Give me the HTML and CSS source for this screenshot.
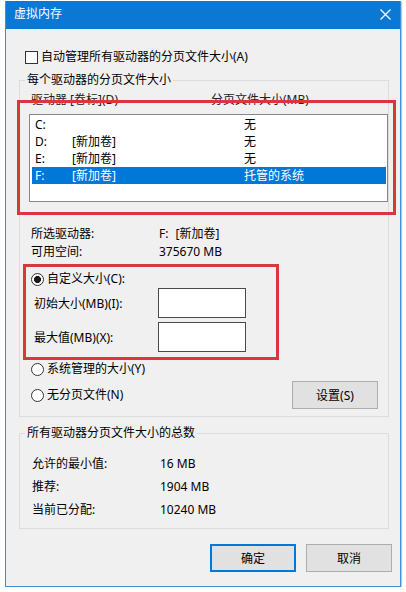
FILE: index.html
```html
<!DOCTYPE html>
<html lang="zh-CN">
<head>
<meta charset="utf-8">
<title>虚拟内存</title>
<link rel="stylesheet" href="styles.css">
</head>
<body>
<div class="window">
  <div class="titlebar">
    <span class="title">虚拟内存</span>
    <svg class="close" width="11" height="11" viewBox="0 0 11 11"><path d="M0.5 0.5 L10.5 10.5 M10.5 0.5 L0.5 10.5" stroke="#fff" stroke-width="1.2" fill="none"/></svg>
  </div>
  <div class="client">
    <div class="check-row"><span class="checkbox"></span><span>自动管理所有驱动器的分页文件大小(A)</span></div>

    <fieldset class="group g1">
      <legend>每个驱动器的分页文件大小</legend>
      <div class="list-head"><span>驱动器 [卷标](D)</span><span>分页文件大小(MB)</span></div>
      <div class="listbox">
        <div class="lrow"><span>C:</span><span></span><span>无</span></div>
        <div class="lrow"><span>D:</span><span>[新加卷]</span><span>无</span></div>
        <div class="lrow"><span>E:</span><span>[新加卷]</span><span>无</span></div>
        <div class="lrow sel"><span>F:</span><span>[新加卷]</span><span>托管的系统</span></div>
      </div>
      <div class="info first"><span>所选驱动器:</span><span>F:<span class="gap"></span>[新加卷]</span></div>
      <div class="info"><span>可用空间:</span><span>375670 MB</span></div>

      <div class="custom">
        <div class="radio-row inner"><span class="radio on"></span><span>自定义大小(C):</span></div>
        <div class="field-row f1"><span class="flabel">初始大小(MB)(I):</span><span class="input"></span></div>
        <div class="field-row f2"><span class="flabel">最大值(MB)(X):</span><span class="input"></span></div>
      </div>

      <div class="radio-row sys"><span class="radio"></span><span>系统管理的大小(Y)</span></div>
      <div class="radio-row none"><span class="radio"></span><span>无分页文件(N)</span><button class="btn set">设置(S)</button></div>
    </fieldset>

    <fieldset class="group g2">
      <legend>所有驱动器分页文件大小的总数</legend>
      <div class="total first"><span>允许的最小值:</span><span>16 MB</span></div>
      <div class="total"><span>推荐:</span><span>1904 MB</span></div>
      <div class="total"><span>当前已分配:</span><span>10240 MB</span></div>
    </fieldset>

    <div class="buttons">
      <button class="btn default">确定</button>
      <button class="btn">取消</button>
    </div>
  </div>
  <div class="annot"></div>
</div>
</body>
</html>
```

FILE: styles.css
```css
html, body {
  margin: 0;
  padding: 0;
  background: #ffffff;
}
body {
  font-family: "Noto Sans", "Noto Sans CJK SC", sans-serif;
  font-size: 12px;
  color: #000;
}
.window {
  position: relative;
  box-sizing: border-box;
  width: 396px;
  margin: 1px 0 0 5px;
  border: 1px solid #3d8fd8;
  border-top: none;
  box-shadow: 1px 1px 1px rgba(0, 0, 0, 0.22);
}
.titlebar {
  height: 28px;
  box-sizing: border-box;
  background: #0b78d4;
  color: #fff;
  display: flex;
  align-items: center;
  justify-content: space-between;
  padding: 0 9px 2px 8px;
}
.title {
  font-size: 12px;
  line-height: 16px;
}
.close {
  display: block;
}
.client {
  background: #f0f0f0;
  padding: 20px 0 14px 0;
}
.check-row {
  display: flex;
  align-items: center;
  height: 16px;
  line-height: 16px;
  padding-left: 19px;
}
.checkbox {
  box-sizing: border-box;
  width: 13px;
  height: 13px;
  border: 1px solid #333;
  background: #fff;
  margin-right: 3px;
  flex: none;
}
.group {
  box-sizing: border-box;
  width: 370px;
  margin: 0 0 0 13px;
  padding: 0;
  border: 1px solid #dcdcdc;
  min-inline-size: 0;
}
.g1 {
  margin-top: 7px;
  padding-bottom: 7px;
}
.g2 {
  margin-top: 8px;
  padding-bottom: 7px;
}
.group legend {
  margin-left: 5px;
  padding: 0 2px;
  line-height: 16px;
  height: 16px;
}
.list-head {
  display: grid;
  grid-template-columns: 180px 1fr;
  margin-top: 4px;
  padding-left: 11px;
  height: 16px;
  line-height: 16px;
  color: #222;
}
.listbox {
  box-sizing: border-box;
  width: 359px;
  height: 88px;
  margin: 6px 0 0 9px;
  padding: 1px;
  border: 1px solid #828790;
  background: #fff;
}
.lrow {
  display: grid;
  grid-template-columns: 37px 172px 1fr;
  height: 17px;
  line-height: 17px;
  margin-left: 1px;
  margin-right: 0;
  padding-left: 3px;
}
.lrow.sel {
  background: #0078d7;
  color: #fff;
}
.info {
  display: grid;
  grid-template-columns: 128px 1fr;
  padding-left: 11px;
  height: 18px;
  line-height: 18px;
}
.info.first {
  margin-top: 23px;
}
.gap {
  display: inline-block;
  width: 7px;
}
.custom {
  box-sizing: border-box;
  width: 256px;
  margin: 3px 0 0 3px;
  border: 3px solid #d9363e;
  padding: 4px 0 5px 5px;
}
.radio-row {
  display: flex;
  align-items: center;
  height: 16px;
  line-height: 16px;
}
.radio {
  box-sizing: border-box;
  width: 13px;
  height: 13px;
  border: 1px solid #333;
  border-radius: 50%;
  background: #fff;
  margin-right: 3px;
  flex: none;
}
.radio.on {
  background: radial-gradient(circle, #1a1a1a 0 3.2px, #fff 3.8px);
}
.field-row {
  display: flex;
  align-items: center;
  padding-left: 3px;
}
.f1 {
  margin-top: 1px;
}
.f2 {
  margin-top: 4px;
}
.flabel {
  width: 124px;
}
.input {
  box-sizing: border-box;
  width: 88px;
  height: 30px;
  border: 1px solid #4a4a4a;
  background: #fff;
}
.sys {
  margin-top: 1px;
  padding-left: 11px;
}
.none {
  margin-top: 4px;
  padding-left: 11px;
  height: 28px;
}
.btn {
  box-sizing: border-box;
  width: 86px;
  height: 28px;
  border: 1px solid #adadad;
  background: #e1e1e1;
  font-family: "Noto Sans", "Noto Sans CJK SC", sans-serif;
  font-size: 12px;
  color: #000;
  padding: 0;
  margin: 0;
}
.set {
  margin-left: auto;
  margin-right: 10px;
}
.total {
  display: grid;
  grid-template-columns: 128px 1fr;
  padding-left: 12px;
  height: 23px;
  line-height: 23px;
}
.total.first {
  margin-top: 11px;
}
.buttons {
  display: flex;
  justify-content: flex-end;
  gap: 10px;
  margin-top: 15px;
  padding-right: 8px;
}
.btn.default {
  border: 2px solid #0078d7;
}
.annot {
  position: absolute;
  left: 11px;
  top: 99px;
  width: 379px;
  height: 115px;
  box-sizing: border-box;
  border: 3px solid #d9363e;
  pointer-events: none;
}
```
